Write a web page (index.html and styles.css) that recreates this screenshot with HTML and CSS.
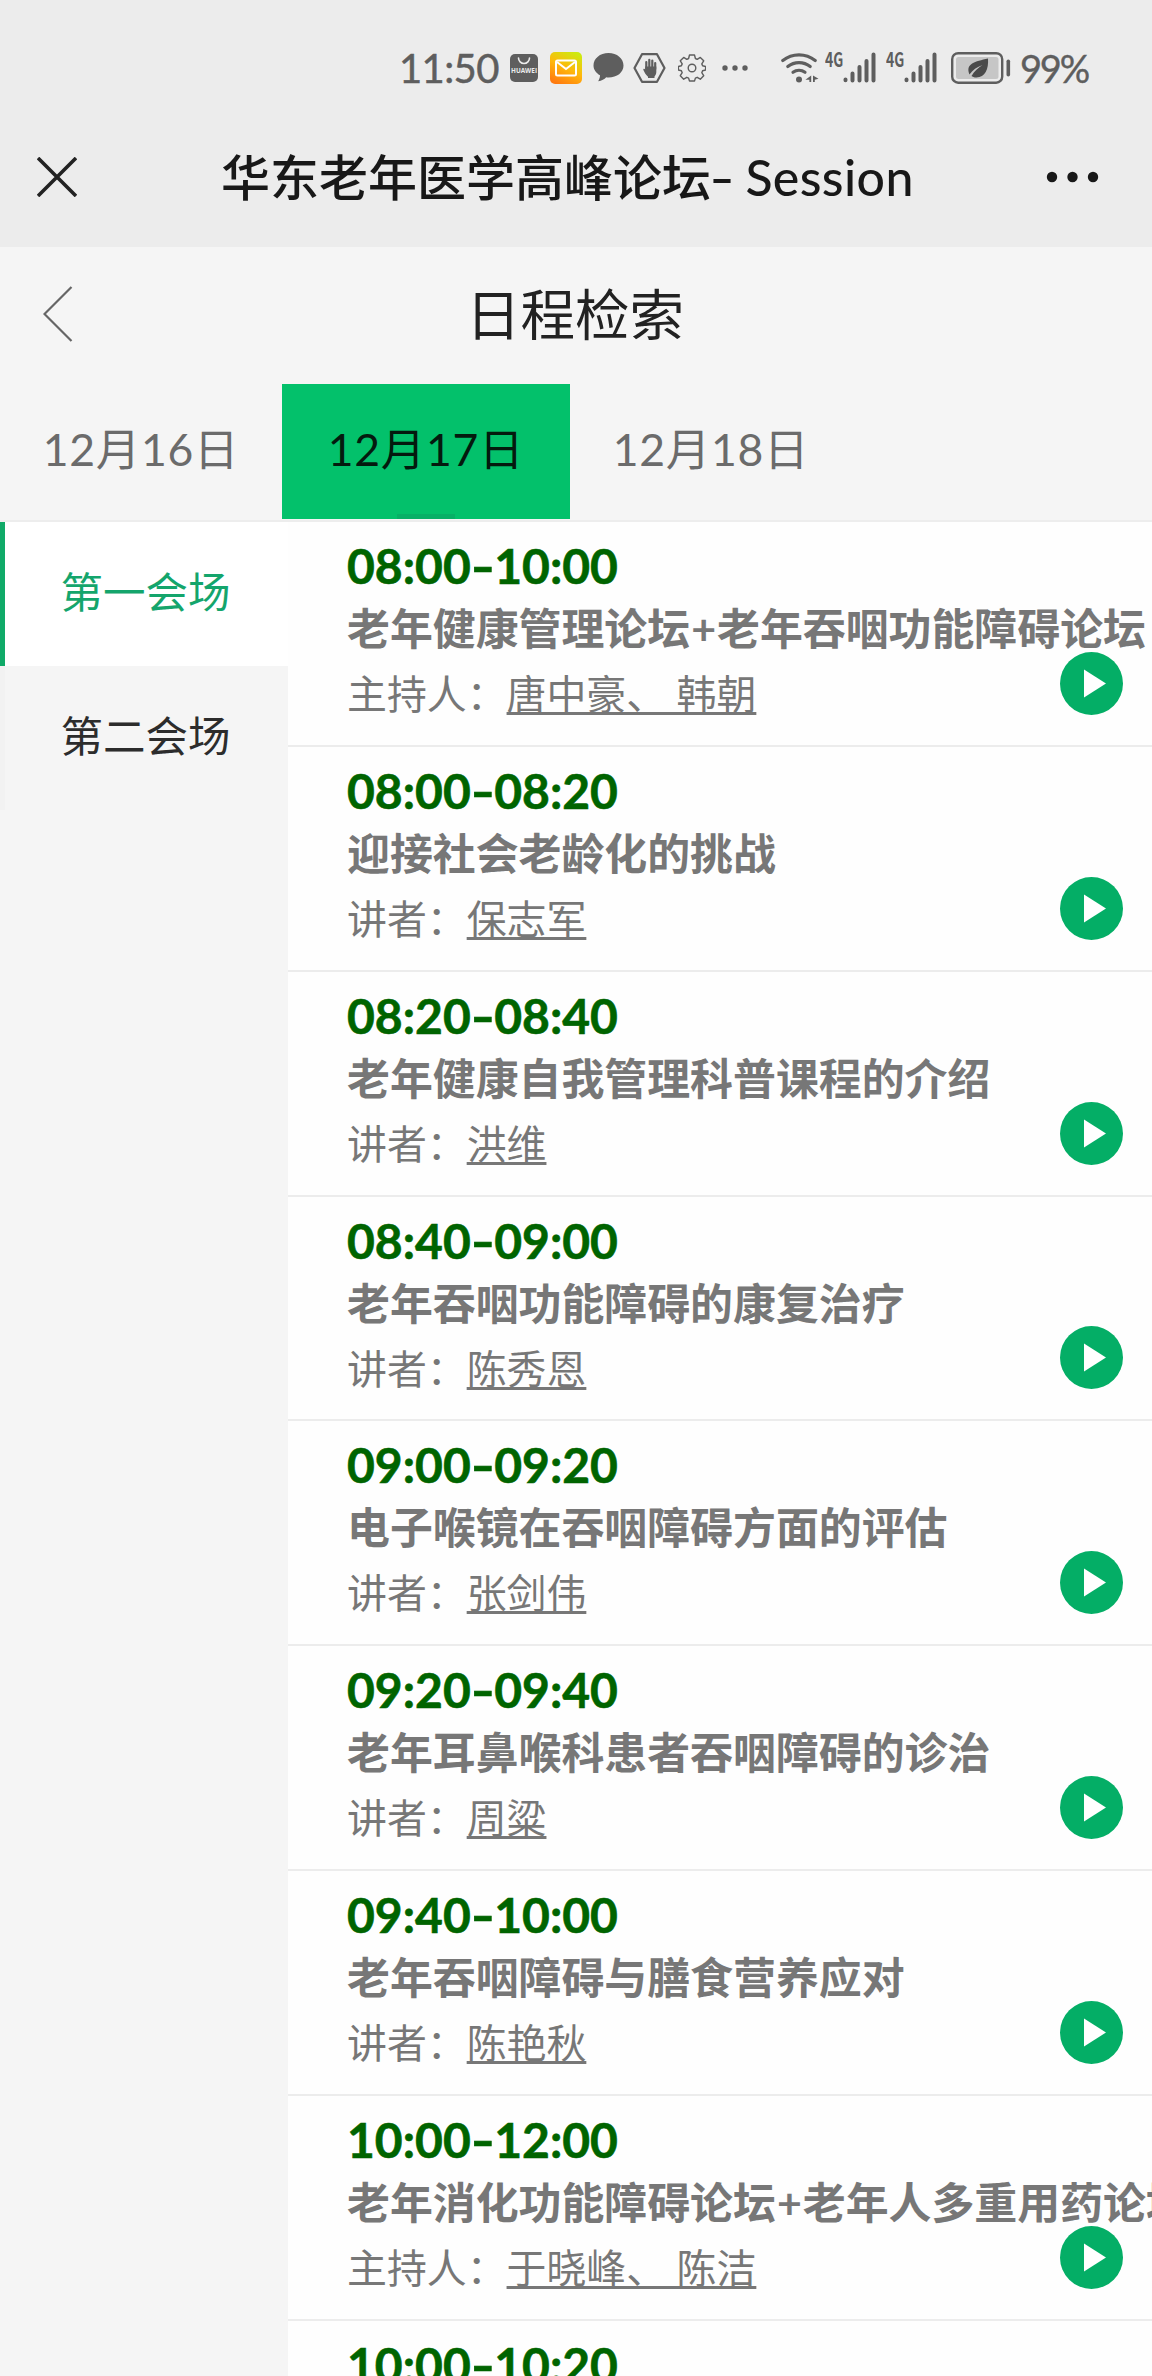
FILE: index.html
```html
<!DOCTYPE html>
<html lang="zh-CN">
<head>
    <meta charset="UTF-8">
    <meta name="viewport" content="width=device-width, initial-scale=1.0">
    <title>华东老年医学高峰论坛- Session</title>
    <link rel="stylesheet" href="styles.css">
</head>
<body>
    <div class="status-bar">
        <span class="clock">11:50</span>
        <svg class="icon-bag" width="28" height="28" viewBox="0 0 28 28">
            <rect width="28" height="28" rx="5" fill="#5e5e5e"/>
            <path d="M8.500 4a5.500 5.500 0 0 0 11 0" fill="none" stroke="#ececec" stroke-width="1.600" stroke-linecap="round"/>
            <text class="bag-text" x="14" y="19" textLength="26" lengthAdjust="spacingAndGlyphs">HUAWEI</text>
        </svg>
        <svg class="icon-mail" width="32" height="32" viewBox="0 0 32 32">
            <defs>
                <linearGradient id="mail" x1="0.25" y1="1" x2="0.75" y2="0">
                    <stop offset="0" stop-color="#ff7a10"/>
                    <stop offset="0.5" stop-color="#ffb80c"/>
                    <stop offset="1" stop-color="#cdea10"/>
                </linearGradient>
            </defs>
            <rect width="32" height="32" rx="5" fill="url(#mail)"/>
            <rect x="6" y="8.500" width="20" height="15" rx="1.500" fill="none" stroke="#fff" stroke-width="2"/>
            <path d="M7 10l9 7 9-7" fill="none" stroke="#fff" stroke-width="2"/>
        </svg>
        <svg class="icon-chat" width="31" height="29" viewBox="0 0 31 29">
            <path d="M15.500 0C7 0 0.500 5.500 0.500 12.500c0 4 2.500 7.500 6.500 9.800 0 2.300-.7 4-1.800 6 3.600-.4 6.200-2 8-4 .8.100 1.500.200 2.300.200C24 24.500 30.500 19.500 30.500 12.500S24 0 15.500 0z" fill="#5e5e5e"/>
        </svg>
        <svg class="icon-hand" width="33" height="30" viewBox="0 0 33 30">
            <path d="M9 1.200h15L31.500 15 24 28.800H9L1.500 15z" fill="none" stroke="#5e5e5e" stroke-width="2.200" stroke-linejoin="round"/>
            <path d="M13.300 16V9M16.300 15V6.800M19.300 15V7.500M22.200 16V10" stroke="#5e5e5e" stroke-width="2.200" stroke-linecap="round"/>
            <path d="M12.200 13.500h11.100v5.500c0 2-.8 3-1.800 4.500v1.500h-6.500v-1.300c-2-1.700-3.600-4.200-4.600-6.700-.4-1.300 1-1.600 1.800-.6z" fill="#5e5e5e"/>
        </svg>
        <svg class="icon-gear" width="28" height="28" viewBox="0 0 28 28">
            <path d="M11.500 1h5l.9 3.500 1.800.8 3.100-1.900 3.400 3.400-1.900 3.100.8 1.800 3 .8v3.500l-3 .8-.8 1.900 1.900 3-3.400 3.500-3.100-1.900-1.800.8-.9 2.900h-5l-.9-2.900-1.800-.8-3.100 1.900-3.400-3.500 1.900-3-.8-1.900-3-.8v-3.500l3-.8.8-1.800-1.900-3.100 3.400-3.400 3.100 1.900 1.800-.8z" fill="none" stroke="#5e5e5e" stroke-width="1.400" stroke-linejoin="round"/>
            <circle cx="14" cy="14" r="3.800" fill="none" stroke="#5e5e5e" stroke-width="1.400"/>
        </svg>
        <svg class="icon-more" width="26" height="6" viewBox="0 0 26 6" fill="#5e5e5e">
            <circle cx="3" cy="3" r="2.700"/>
            <circle cx="13" cy="3" r="2.700"/>
            <circle cx="23" cy="3" r="2.700"/>
        </svg>
        <svg class="icon-wifi" width="38" height="31" viewBox="0 0 38 31">
            <g fill="none" stroke="#5e5e5e" stroke-width="3.200" stroke-linecap="round">
                <path d="M1.800 8.500a26 26 0 0 1 32.400 0"/>
                <path d="M6.800 14.500a18 18 0 0 1 22.400 0"/>
                <path d="M12 20.300a10 10 0 0 1 12 0"/>
            </g>
            <circle cx="18" cy="27.500" r="3" fill="#5e5e5e"/>
            <path d="M30.200 23.500v6.500h-1.800v-2.200h-4zM32 23.500l5.500 3.300-3.700 1v2.200H32z" fill="#5e5e5e"/>
        </svg>
        <div class="signal">
            <span>4G</span>
            <svg width="33" height="31" viewBox="0 0 33 31" stroke="#5e5e5e" stroke-width="4" stroke-linecap="round">
                <path d="M2.500 27.500v.8M9.500 21.500v7M16.500 15v13.500M23.500 9v19.500M30.500 2.500v26"/>
            </svg>
        </div>
        <div class="signal">
            <span>4G</span>
            <svg width="33" height="31" viewBox="0 0 33 31" stroke="#5e5e5e" stroke-width="4" stroke-linecap="round">
                <path d="M2.500 27.500v.8M9.500 21.500v7M16.500 15v13.500M23.500 9v19.500M30.500 2.500v26"/>
            </svg>
        </div>
        <svg class="icon-battery" width="60" height="32" viewBox="0 0 60 32">
            <rect x="1.200" y="1.200" width="50" height="29.500" rx="6" fill="#ececec" stroke="#5e5e5e" stroke-width="2.400"/>
            <rect x="5" y="5" width="42.500" height="22" rx="2.500" fill="#c6c6c6"/>
            <path d="M37 6.500c.8 10.500-3 19-11.500 19-2.500 0-4-.7-5-1.500 3-5 6.500-8 11-11-5.500 2-10 5-13 9.500C14 11.500 24 9.500 37 6.500z" fill="#4a4a4a"/>
            <rect x="55.500" y="7.500" width="3.600" height="17" rx="1.800" fill="#5e5e5e"/>
        </svg>
        <span class="percent">99%</span>
    </div>

    <div class="nav-bar">
        <svg class="close" width="40" height="40" viewBox="0 0 40 40">
            <path d="M1 1l38 38M39 1L1 39" stroke="#222" stroke-width="3.600"/>
        </svg>
        <div class="nav-title">华东老年医学高峰论坛<i>-</i> <span class="latin">Session</span></div>
        <svg class="menu" width="54" height="12" viewBox="0 0 54 12" fill="#181818">
            <circle cx="6" cy="6" r="5.200"/>
            <circle cx="26.500" cy="6" r="5.200"/>
            <circle cx="47" cy="6" r="5.200"/>
        </svg>
    </div>

    <div class="page-header">
        <svg class="back" width="30" height="56" viewBox="0 0 30 56">
            <path d="M28.500 1L1.500 28l27 27" fill="none" stroke="#666" stroke-width="2.200"/>
        </svg>
        <h1>日程检索</h1>
    </div>

    <div class="tabs">
        <div class="tab">12月16日</div>
        <div class="tab active">12月17日</div>
        <div class="tab">12月18日</div>
    </div>

    <div class="content">
        <div class="sidebar">
            <div class="room active">第一会场</div>
            <div class="room">第二会场</div>
        </div>
        <div class="list">
            <div class="item">
                <div class="time">08:00<i>-</i>10:00</div>
                <div class="title">老年健康管理论坛<span class="plus">+</span>老年吞咽功能障碍论坛</div>
                <div class="speaker">主持人：<u>唐中豪、 韩朝</u></div>
                <svg class="play" viewBox="0 0 63 63"><circle cx="31.500" cy="31.500" r="31.500"/><path d="M24 17.500L46 31.500 24 45.500z"/></svg>
            </div>
            <div class="item">
                <div class="time">08:00<i>-</i>08:20</div>
                <div class="title">迎接社会老龄化的挑战</div>
                <div class="speaker">讲者：<u>保志军</u></div>
                <svg class="play" viewBox="0 0 63 63"><circle cx="31.500" cy="31.500" r="31.500"/><path d="M24 17.500L46 31.500 24 45.500z"/></svg>
            </div>
            <div class="item">
                <div class="time">08:20<i>-</i>08:40</div>
                <div class="title">老年健康自我管理科普课程的介绍</div>
                <div class="speaker">讲者：<u>洪维</u></div>
                <svg class="play" viewBox="0 0 63 63"><circle cx="31.500" cy="31.500" r="31.500"/><path d="M24 17.500L46 31.500 24 45.500z"/></svg>
            </div>
            <div class="item">
                <div class="time">08:40<i>-</i>09:00</div>
                <div class="title">老年吞咽功能障碍的康复治疗</div>
                <div class="speaker">讲者：<u>陈秀恩</u></div>
                <svg class="play" viewBox="0 0 63 63"><circle cx="31.500" cy="31.500" r="31.500"/><path d="M24 17.500L46 31.500 24 45.500z"/></svg>
            </div>
            <div class="item">
                <div class="time">09:00<i>-</i>09:20</div>
                <div class="title">电子喉镜在吞咽障碍方面的评估</div>
                <div class="speaker">讲者：<u>张剑伟</u></div>
                <svg class="play" viewBox="0 0 63 63"><circle cx="31.500" cy="31.500" r="31.500"/><path d="M24 17.500L46 31.500 24 45.500z"/></svg>
            </div>
            <div class="item">
                <div class="time">09:20<i>-</i>09:40</div>
                <div class="title">老年耳鼻喉科患者吞咽障碍的诊治</div>
                <div class="speaker">讲者：<u>周粱</u></div>
                <svg class="play" viewBox="0 0 63 63"><circle cx="31.500" cy="31.500" r="31.500"/><path d="M24 17.500L46 31.500 24 45.500z"/></svg>
            </div>
            <div class="item">
                <div class="time">09:40<i>-</i>10:00</div>
                <div class="title">老年吞咽障碍与膳食营养应对</div>
                <div class="speaker">讲者：<u>陈艳秋</u></div>
                <svg class="play" viewBox="0 0 63 63"><circle cx="31.500" cy="31.500" r="31.500"/><path d="M24 17.500L46 31.500 24 45.500z"/></svg>
            </div>
            <div class="item">
                <div class="time">10:00<i>-</i>12:00</div>
                <div class="title">老年消化功能障碍论坛<span class="plus">+</span>老年人多重用药论坛</div>
                <div class="speaker">主持人：<u>于晓峰、 陈洁</u></div>
                <svg class="play" viewBox="0 0 63 63"><circle cx="31.500" cy="31.500" r="31.500"/><path d="M24 17.500L46 31.500 24 45.500z"/></svg>
            </div>
            <div class="item">
                <div class="time">10:00<i>-</i>10:20</div>
            </div>
        </div>
    </div>
</body>
</html>
```
FILE: styles.css
```css
* {
    box-sizing: border-box;
}

body {
    margin: 0;
    height: 2376px;
    overflow: hidden;
    display: flex;
    flex-direction: column;
    background-color: #f5f5f5;
    font-family: Lato, "Noto Sans CJK SC", sans-serif;
}

svg {
    display: block;
    flex: none;
}

/* phone status bar */
.status-bar {
    flex: none;
    display: flex;
    align-items: center;
    height: 107px;
    padding: 28px 0 0 399px;
    background-color: #ececec;
    color: #5e5e5e;
}

.clock {
    width: 99px;
    font-size: 40px;
    line-height: 40px;
    letter-spacing: -0.6px;
    white-space: nowrap;
    -webkit-text-stroke: 0.5px #5e5e5e;
}

.icon-bag { margin-left: 12px; }
.icon-mail { margin-left: 12px; }
.icon-chat { margin-left: 11px; }
.icon-hand { margin-left: 9px; }
.icon-gear { margin-left: 12px; }
.icon-more { margin-left: 16px; }
.icon-wifi { margin-left: 33px; }
.icon-battery { margin-left: 11px; }

.bag-text {
    font-family: "Open Sans", sans-serif;
    font-size: 6.5px;
    font-weight: bold;
    text-anchor: middle;
    fill: #ececec;
}

.signal {
    display: flex;
    width: 54px;
    margin-left: 6px;
}

.signal + .signal {
    margin-left: 7px;
}

.signal span {
    width: 18px;
    font-family: "Noto Sans CJK SC", sans-serif;
    font-size: 20px;
    font-weight: bold;
    line-height: 14px;
    transform: scaleX(0.7);
    transform-origin: left;
}

.percent {
    margin-left: 9px;
    font-size: 38px;
    line-height: 40px;
    letter-spacing: -2.2px;
    -webkit-text-stroke: 0.4px #5e5e5e;
}

/* browser bar */
.nav-bar {
    flex: none;
    display: flex;
    align-items: center;
    height: 140px;
    padding: 0 52px 0 37px;
    background-color: #ececec;
    color: #181818;
}

.nav-title {
    width: 693px;
    margin-left: 144px;
    font-size: 49px;
    font-weight: 500;
    line-height: 70px;
    white-space: nowrap;
}

.nav-title i {
    display: inline-block;
    width: 22px;
    font-style: normal;
    text-align: center;
    transform: scaleX(1.4);
}

.nav-title .latin {
    font-size: 50px;
    letter-spacing: 0.4px;
}

.close, .menu {
    margin-top: -1px;
}

.menu {
    margin-left: 132px;
}

/* page header */
.page-header {
    flex: none;
    display: grid;
    grid-template-columns: 106px 1fr 108px;
    align-items: center;
    height: 137px;
    padding-bottom: 3px;
}

.back {
    margin-left: 43px;
}

.page-header h1 {
    margin: 0;
    color: #222;
    font-size: 54.5px;
    font-weight: normal;
    line-height: 80px;
    text-align: center;
}

.tabs {
    flex: none;
    display: flex;
    height: 138px;
    padding-bottom: 1px;
    border-bottom: 2px solid #ededed;
}

.tab {
    width: 282px;
    color: #6b6b6b;
    font-size: 44.5px;
    line-height: 130px;
    letter-spacing: 0.7px;
    text-align: center;
}

.tab.active {
    width: 288px;
    background: linear-gradient(#07b066, #07b066) center bottom / 58px 5px no-repeat #03c16b;
    color: #041a0e;
}

/* rooms and sessions */
.content {
    flex: 1;
    display: flex;
    min-height: 0;
}

.sidebar {
    flex: none;
    width: 288px;
}

.room {
    height: 144px;
    padding-right: 2px;
    border-left: 5px solid #f2f2f2;
    color: #2c2c2c;
    font-size: 42.5px;
    line-height: 139px;
    text-align: center;
}

.room.active {
    border-left-color: #10aa68;
    background-color: #fff;
    color: #14a56c;
}

.list {
    flex: 1;
    min-width: 0;
    overflow: hidden;
    background-color: #fefefe;
}

.item {
    position: relative;
    height: 224.85px;
    padding: 14px 0 0 59px;
    border-bottom: 2px solid #ececec;
    color: #777;
    white-space: nowrap;
}

.time {
    color: #006400;
    font-size: 48px;
    font-weight: bold;
    line-height: 60px;
    -webkit-text-stroke: 0.6px #006400;
}

.time i {
    display: inline-block;
    width: 23.5px;
    font-style: normal;
    text-align: center;
    transform: scaleX(1.35);
}

.title {
    padding-top: 1px;
    font-size: 42.9px;
    font-weight: bold;
    line-height: 64px;
}

.title .plus {
    padding: 0 1px;
}

.speaker {
    font-family: "Noto Sans CJK SC", sans-serif;
    font-size: 39.9px;
    line-height: 62px;
}

.speaker u {
    text-decoration-thickness: 3px;
    text-underline-offset: 3px;
    text-decoration-skip-ink: none;
    word-spacing: 1.5px;
}

.play {
    position: absolute;
    right: 29px;
    bottom: 30px;
    width: 63px;
    height: 63px;
}

.play circle {
    fill: #04ae66;
}

.play path {
    fill: #fff;
}
```
